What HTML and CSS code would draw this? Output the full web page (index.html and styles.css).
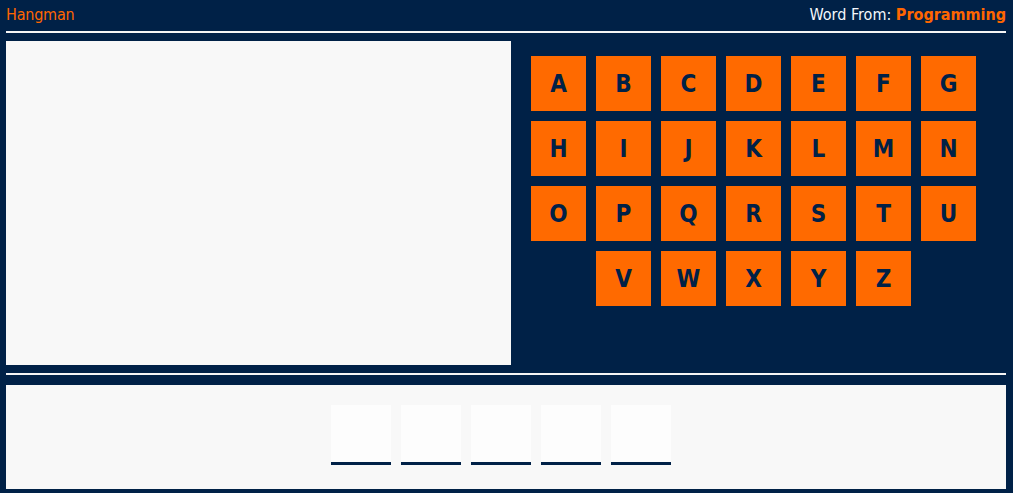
FILE: index.html
```html
<!DOCTYPE html>
<html>
<head>
<meta charset="utf-8">
<link rel="stylesheet" href="styles.css">
</head>
<body>
<div class="page">
  <header class="top">
    <span class="title">Hangman</span>
    <span class="source">Word From: <b class="category">Programming</b></span>
  </header>
  <div class="rule"></div>
  <main class="game">
    <section class="canvas"></section>
    <section class="letters">
      <button class="key">A</button><button class="key">B</button><button class="key">C</button><button class="key">D</button><button class="key">E</button><button class="key">F</button><button class="key">G</button>
      <button class="key">H</button><button class="key">I</button><button class="key">J</button><button class="key">K</button><button class="key">L</button><button class="key">M</button><button class="key">N</button>
      <button class="key">O</button><button class="key">P</button><button class="key">Q</button><button class="key">R</button><button class="key">S</button><button class="key">T</button><button class="key">U</button>
      <button class="key">V</button><button class="key">W</button><button class="key">X</button><button class="key">Y</button><button class="key">Z</button>
    </section>
  </main>
  <div class="rule rule-bottom"></div>
  <section class="guess">
    <span class="slot"></span><span class="slot"></span><span class="slot"></span><span class="slot"></span><span class="slot"></span>
  </section>
</div>
</body>
</html>
```
FILE: styles.css
```css
html, body {
  margin: 0;
  padding: 0;
  background: #002147;
}
body {
  font-family: "DejaVu Sans Condensed", "DejaVu Sans", sans-serif;
  font-stretch: condensed;
}
.page {
  width: 1000px;
  margin-left: 6px;
}
.top {
  display: flex;
  justify-content: space-between;
  align-items: flex-start;
  height: 26px;
  padding-top: 5px;
  font-size: 16px;
  line-height: 19px;
}
.title {
  color: #ff6600;
  letter-spacing: -0.2px;
}
.source {
  color: #f4f8fc;
}
.category {
  color: #ff6600;
  font-weight: bold;
}
.rule {
  height: 2px;
  background: #f5f5f5;
}
.game {
  display: flex;
  margin-top: 8px;
}
.canvas {
  width: 505px;
  height: 324px;
  background: #f8f8f8;
}
.letters {
  width: 445px;
  margin-left: 20px;
  padding-top: 15px;
  display: flex;
  flex-wrap: wrap;
  justify-content: center;
  align-content: flex-start;
  gap: 10px;
}
.key {
  width: 55px;
  height: 55px;
  padding: 0;
  border: none;
  background: #ff6a00;
  color: #002147;
  font-family: "DejaVu Sans Condensed", "DejaVu Sans", sans-serif;
  font-stretch: condensed;
  font-weight: bold;
  font-size: 24px;
  display: flex;
  align-items: center;
  justify-content: center;
}
.rule-bottom {
  margin-top: 8px;
}
.guess {
  margin-top: 10px;
  height: 84px;
  padding-top: 20px;
  background: #f8f8f8;
  display: flex;
  justify-content: center;
  align-items: flex-start;
}
.slot {
  width: 60px;
  height: 57px;
  margin-right: 10px;
  background: #fdfdfd;
  border-bottom: 3px solid #002147;
}
```
